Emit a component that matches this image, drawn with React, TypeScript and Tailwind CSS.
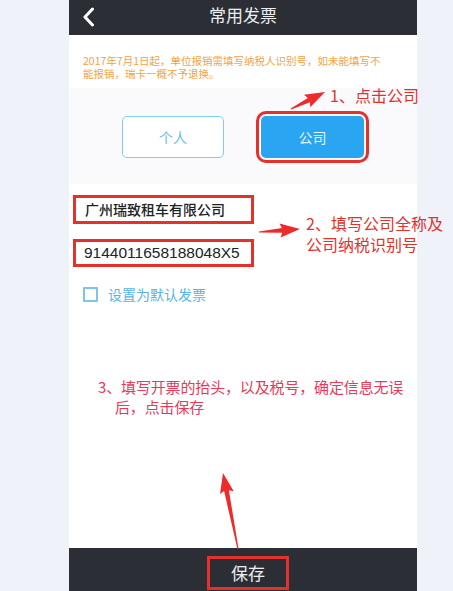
import React from 'react';

const font = { fontFamily: '"Noto Sans CJK SC", "Noto Sans", sans-serif' };

function Arrow({ x1, y1, x2, y2 }: { x1: number; y1: number; x2: number; y2: number }) {
  // red tapered arrow drawn from tail (x1,y1) to tip (x2,y2)
  const dx = x2 - x1;
  const dy = y2 - y1;
  const len = Math.hypot(dx, dy);
  const ux = dx / len;
  const uy = dy / len;
  const px = -uy;
  const py = ux;
  const head = 18;
  const hw = 7;
  const sw = 2.4;
  const bx = x2 - ux * head;
  const by = y2 - uy * head;
  const pts = [
    [x1 + px * 0.6, y1 + py * 0.6],
    [bx + px * sw, by + py * sw],
    [bx + px * hw - ux * 2, by + py * hw - uy * 2],
    [x2, y2],
    [bx - px * hw - ux * 2, by - py * hw - uy * 2],
    [bx - px * sw, by - py * sw],
    [x1 - px * 0.6, y1 - py * 0.6],
  ]
    .map((p) => p.join(','))
    .join(' ');
  return <polygon points={pts} fill="#ee2b2b" />;
}

export default function App() {
  return (
    <div className="relative w-[453px] h-[591px] overflow-hidden bg-[#eff2f9]" style={font}>
      <div className="ml-[69px] w-[348px] h-full flex flex-col bg-white">
        {/* header */}
        <div className="h-[35px] bg-[#2c2e35] flex items-center relative shrink-0">
          <svg width="14" height="20" viewBox="0 0 14 20" className="ml-[13px] mb-[2px]">
            <path d="M10.5 2 L3 10 L10.5 18" stroke="#fff" strokeWidth="3" fill="none" strokeLinecap="round" strokeLinejoin="round" />
          </svg>
          <div className="absolute inset-0 flex items-center justify-center text-[17px] text-[#eceef2] pb-[6px]">常用发票</div>
        </div>

        {/* notice */}
        <div className="h-[53px] bg-white pl-[14px] pt-[19px] text-[10.5px] leading-[13px] text-[#f4a340] shrink-0 whitespace-nowrap">
          2017年7月1日起，单位报销需填写纳税人识别号，如未能填写不
          <br />
          能报销，瑞卡一概不予退换。
        </div>

        {/* type selector */}
        <div className="h-[96px] bg-[#fafafc] flex items-start gap-[37px] pl-[53px] pt-[28px] shrink-0">
          <div className="w-[102px] h-[42px] rounded-[5px] border border-[#7fcdee] bg-white flex items-center justify-center text-[14px] text-[#6bbde6]">
            个人
          </div>
          <div className="w-[103px] h-[42px] rounded-[5px] bg-[#2aa5f1] flex items-center justify-center text-[14px] text-[#e6f4fd] outline-[3px] outline outline-[#e5312c] outline-offset-[2px]">
            公司
          </div>
        </div>

        {/* inputs */}
        <div className="flex flex-col pt-[11px] pl-[4px]">
          <div className="w-[181px] h-[29px] border-[3px] border-[#e5312c] flex items-center pl-[9px] text-[14px] font-medium text-[#222]">
            广州瑞致租车有限公司
          </div>
          <div
            className="w-[181px] h-[28px] mt-[15px] border-[3px] border-[#e5312c] flex items-center pl-[8px] text-[15.5px] text-[#222]"
            style={{ fontFamily: '"Liberation Sans", Arial, sans-serif' }}
          >
            9144011658188048X5
          </div>
          <div className="flex items-center mt-[17px] ml-[10px] gap-[10px]">
            <div className="w-[15px] h-[15px] border-2 border-[#7cc6ec] rounded-[1px]" />
            <span className="text-[14px] text-[#55b5e6]">设置为默认发票</span>
          </div>
        </div>

        <div className="flex-1" />

        {/* bottom bar */}
        <div className="h-[43px] bg-[#2c2e35] flex justify-center shrink-0">
          <div className="mt-[8px] ml-[10px] w-[82px] h-[34px] border-[3px] border-[#e5312c] flex items-center justify-center text-[17px] text-[#eceef2]">
            保存
          </div>
        </div>
      </div>

      {/* annotations */}
      <div className="absolute left-[330px] top-[85px] text-[16px] leading-[20px] text-[#e5312c] whitespace-nowrap">1、点击公司</div>
      <div className="absolute left-[306px] top-[213px] text-[16px] leading-[21px] text-[#e5312c] whitespace-nowrap">
        2、填写公司全称及
        <br />
        公司纳税识别号
      </div>
      <div className="absolute left-[98px] top-[377px] text-[15px] leading-[20px] tracking-[-0.15px] text-[#e8395a] whitespace-nowrap">
        3、填写开票的抬头，以及税号，确定信息无误
        <br />
        <span className="pl-[17px]">后，点击保存</span>
      </div>
      <svg className="absolute left-0 top-0 pointer-events-none" width="453" height="591">
        <Arrow x1={291} y1={109} x2={325} y2={92} />
        <Arrow x1={259} y1={232} x2={300} y2={229} />
        <Arrow x1={238} y1={549} x2={223} y2={473} />
      </svg>
    </div>
  );
}
